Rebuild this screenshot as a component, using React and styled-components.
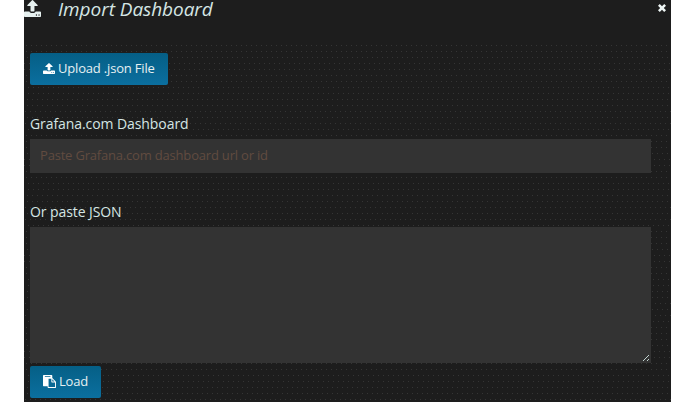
import React from "react";
import styled, { createGlobalStyle } from "styled-components";

const GlobalStyle = createGlobalStyle`
  *, *::before, *::after { box-sizing: border-box; }
  html, body { margin: 0; background: #fff; }
  body { font-family: "Open Sans", "Noto Sans", sans-serif; }
`;

// Horizontal phase of each row in the dotted texture.
const phases = [2, 2, 3, 0, 0, 2, 2, 4, 4, 3, 3, 1, 3, 1, 4, 2];
const rows = Array.from({ length: 60 }, (_, i) => i);
const dotImages = rows
  .map(() => "linear-gradient(90deg, #353535 1px, transparent 1px)")
  .join(", ");
const dotPositions = rows
  .map((i) => `${phases[i % phases.length]}px ${1 + i * 6}px`)
  .join(", ");

const Modal = styled.main`
  width: 647px;
  height: 402px;
  margin-left: 24px;
  background: #1d1d1d;
  color: #d5e6e4;
`;

const Header = styled.header`
  display: flex;
  height: 44px;
  align-items: flex-start;
  padding-right: 4px;
`;

const Title = styled.h1`
  flex: 1;
  margin: 0 0 0 17px;
  font-size: 19px;
  line-height: 18px;
  font-style: italic;
  font-weight: 400;
  letter-spacing: -0.05px;
`;

const CloseButton = styled.button`
  width: 10px;
  height: 10px;
  margin-top: 3px;
  padding: 0;
  border: 0;
  background: none;
  color: #eef5f4;
`;

const Content = styled.div`
  height: 358px;
  padding: 9px 20px 0 6px;
  background-image: ${dotImages};
  background-size: 5px 1px;
  background-repeat: repeat-x;
  background-position: ${dotPositions};
`;

const Button = styled.button`
  display: flex;
  align-items: center;
  width: ${(p) => p.$width};
  height: 32px;
  padding: 0 0 2px 13px;
  gap: 3px;
  border: 0;
  border-radius: 2px;
  background: linear-gradient(#055f86, #0b6f9f);
  color: #e6f0f2;
  font: 400 13px/20px "Open Sans", "Noto Sans", sans-serif;
  letter-spacing: -0.18px;
  white-space: nowrap;
`;

const Field = styled.div`
  margin-top: 30px;
`;

const Label = styled.label`
  display: block;
  height: 24px;
  font-size: 14px;
  line-height: 18px;
  letter-spacing: -0.08px;
`;

const Input = styled.input`
  display: block;
  width: 100%;
  height: 34px;
  padding: 0 10px 2px;
  border: 0;
  border-radius: 0;
  outline: 0;
  background: #333;
  color: #d5e2df;
  font: 400 13px/20px "Open Sans", "Noto Sans", sans-serif;
  letter-spacing: -0.19px;
  &::placeholder { color: #614b40; opacity: 1; }
`;

const JsonArea = styled.div`
  display: flex;
  height: 136px;
  margin-bottom: 3px;
  align-items: flex-end;
  justify-content: flex-end;
  background: #333;
`;

const JsonInput = styled.textarea`
  flex: 1;
  align-self: stretch;
  padding: 8px 10px;
  border: 0;
  outline: 0;
  resize: none;
  background: transparent;
  color: #d5e2df;
  font: 400 13px/20px "Open Sans", "Noto Sans", sans-serif;
`;

const Icon = styled.svg`
  display: block;
  flex: none;
  width: ${(p) => p.$w}px;
  height: ${(p) => p.$h || p.$w}px;
  margin: ${(p) => p.$margin || 0};
  fill: currentColor;
  color: ${(p) => p.$color || "inherit"};
`;

function UploadIcon(props) {
  return (
    <Icon viewBox="64 64 1664 1600" preserveAspectRatio="none" {...props}>
      <path d="M1344 1472q0-26-19-45t-45-19-45 19-19 45 19 45 45 19 45-19 19-45zm256 0q0-26-19-45t-45-19-45 19-19 45 19 45 45 19 45-19 19-45zm128-224v320q0 40-28 68t-68 28h-1472q-40 0-68-28t-28-68v-320q0-40 28-68t68-28h427q21 56 70.5 92t110.5 36h256q61 0 110.5-36t70.5-92h427q40 0 68 28t28 68zm-325-648q-17 40-59 40h-256v448q0 26-19 45t-45 19h-256q-26 0-45-19t-19-45v-448h-256q-42 0-59-40-17-39 14-69l448-448q18-19 45-19t45 19l448 448q31 30 14 69z" />
    </Icon>
  );
}

function PasteIcon(props) {
  return (
    <Icon viewBox="0 0 1792 1792" {...props}>
      <path d="M768 1664h896v-640h-416q-40 0-68-28t-28-68v-416h-384v1152zm256-1440v-64q0-13-9.5-22.5t-22.5-9.5h-704q-13 0-22.5 9.5t-9.5 22.5v64q0 13 9.5 22.5t22.5 9.5h704q13 0 22.5-9.5t9.5-22.5zm256 672h299l-299-299v299zm512 128v672q0 40-28 68t-68 28h-960q-40 0-68-28t-28-68v-160h-544q-40 0-68-28t-28-68v-1344q0-40 28-68t68-28h1088q40 0 68 28t28 68v328q21 13 36 28l408 408q28 28 48 76t20 88z" />
    </Icon>
  );
}

export default function App() {
  return (
    <>
      <GlobalStyle />
      <Modal>
        <Header>
          <UploadIcon $w={17} $h={17} $color="#e6f0ef" />
          <Title>Import Dashboard</Title>
          <CloseButton aria-label="Close">
            <Icon viewBox="0 0 10 10" $w={10}>
              <path d="M1 2.8 2.8 1 5 3.2 7.2 1 9 2.8 6.8 5 9 7.2 7.2 9 5 6.8 2.8 9 1 7.2 3.2 5Z" />
            </Icon>
          </CloseButton>
        </Header>
        <Content>
          <Button $width="138px">
            <UploadIcon $w={12} $h={11} $color="#fff" />
            Upload .json File
          </Button>
          <Field>
            <Label htmlFor="dashboard">Grafana.com Dashboard</Label>
            <Input id="dashboard" placeholder="Paste Grafana.com dashboard url or id" />
          </Field>
          <Field>
            <Label htmlFor="json">Or paste JSON</Label>
            <JsonArea>
              <JsonInput id="json" />
              <Icon viewBox="0 0 8 8" $w={8} $margin="0 1px 1px 0">
                <path d="M1 7 7 1M5 7 7 5" stroke="#c3d5d2" strokeWidth="1" />
              </Icon>
            </JsonArea>
          </Field>
          <Button $width="71px">
            <PasteIcon $w={13} $color="#fff" />
            Load
          </Button>
        </Content>
      </Modal>
    </>
  );
}
